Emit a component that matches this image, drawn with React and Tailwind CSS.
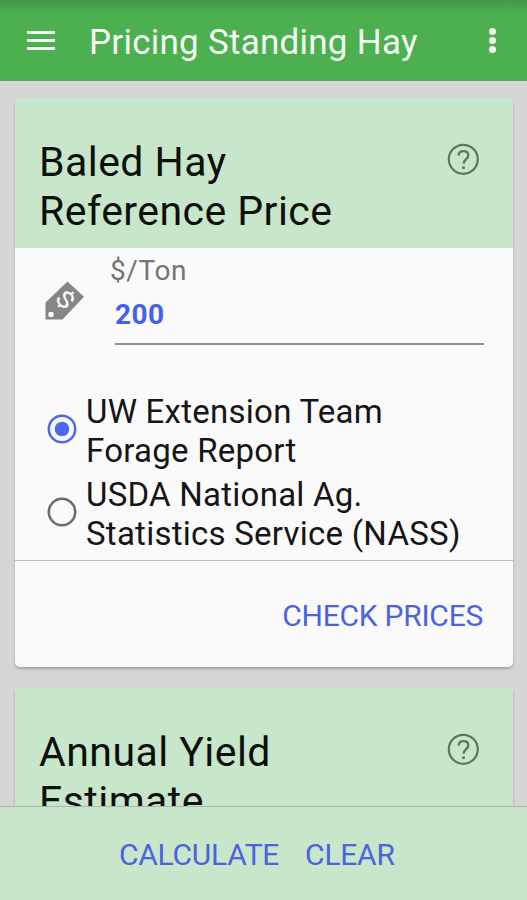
import clsx from "clsx";

const reports = [
  { id: "uw", lines: ["UW Extension Team", "Forage Report"], checked: true },
  { id: "usda", lines: ["USDA National Ag.", "Statistics Service (NASS)"], checked: false },
];

function HelpIcon() {
  return (
    <svg width="32" height="32" viewBox="0 0 32 32" fill="none" stroke="#5a765c" strokeWidth="2.2">
      <circle cx="16.3" cy="16.3" r="14.5" />
      <path d="M11.7 12.6c0-2.8 2-4.4 4.8-4.4 2.9 0 4.8 1.7 4.8 4.2 0 3.7-4.7 4-4.7 8.4" strokeWidth="2.3" />
      <path d="M16.5 23.4v2.6" strokeWidth="2.8" />
    </svg>
  );
}

function TagIcon() {
  return (
    <svg width="40" height="40" viewBox="0 0 40 40">
      <path d="M22.5 0.5 39 15.8 17.5 38.5H0.5V21.5Z" fill="#868686" />
      <rect x="3.5" y="31" width="5" height="5" rx="1.2" fill="#fafafa" />
      <text
        x="0"
        y="0"
        transform="translate(20.5 18.5) rotate(46) scale(1.25 0.95)"
        dy="8.5"
        textAnchor="middle"
        fontSize="24"
        fontFamily="Roboto"
        fill="#fafafa"
      >
        $
      </text>
    </svg>
  );
}

function RadioIcon({ checked }) {
  return (
    <svg
      className={clsx("mb-[4px] shrink-0", checked ? "text-[#4b69ee]" : "text-[#6b6b6b]")}
      width="30"
      height="30"
      viewBox="0 0 30 30"
    >
      <circle cx="15" cy="15" r="13.2" fill="none" stroke="currentColor" strokeWidth="2.5" />
      {checked && <circle cx="15" cy="15" r="7.3" fill="currentColor" />}
    </svg>
  );
}

function CardHeader({ lines }) {
  return (
    <div className="flex h-[150px] items-start justify-between bg-[#c8e6c9] pl-6 pr-[34px]">
      <h2 className="pt-10 text-[41px] leading-[49px] tracking-[0.45px] text-[#0c0f0c]">
        {lines.map((line) => (
          <span key={line} className="block whitespace-nowrap">{line}</span>
        ))}
      </h2>
      <button className="mt-[45px]"><HelpIcon /></button>
    </div>
  );
}

export default function App() {
  return (
    <div className="flex h-[900px] w-[527px] flex-col overflow-hidden bg-[#d6d6d6] font-['Roboto',sans-serif]">
      <header className="flex h-[81px] shrink-0 items-center bg-linear-to-b from-[#429746] via-[#4caf50] via-15% to-[#4caf50] pl-[27px] pr-[31px] text-[#f4fbf0]">
        <div className="flex w-7 flex-col gap-[5px]">
          <span className="h-[3px] bg-current" />
          <span className="h-[3px] bg-current" />
          <span className="h-[3px] bg-current" />
        </div>
        <h1 className="ml-[34px] flex-1 whitespace-nowrap pt-[4px] text-[35px] leading-[42px] tracking-[0.25px]">
          Pricing Standing Hay
        </h1>
        <div className="flex flex-col gap-[2px]">
          <span className="size-[7px] rounded-full bg-current" />
          <span className="size-[7px] rounded-full bg-current" />
          <span className="size-[7px] rounded-full bg-current" />
        </div>
      </header>

      <main className="flex min-h-0 flex-1 flex-col gap-[21px] overflow-hidden pl-[15px] pr-[14px] pt-[17px]">
        <section className="h-[569px] shrink-0 overflow-hidden rounded-[5px] bg-[#fafafa] shadow-[0_2px_3px_rgba(0,0,0,0.25)]">
          <CardHeader lines={["Baled Hay", "Reference Price"]} />
          <div className="flex h-[144px] pl-[30px] pr-[29px]">
            <div className="w-[65px] pt-[33px]"><TagIcon /></div>
            <div className="flex-1">
              <label className="block pt-[6px] text-[28px] leading-[33px] tracking-[0.6px] text-[#757575]">$/Ton</label>
              <div className="ml-[5px] h-[58px] border-b-2 border-[#8f8f8f] pt-[11px] text-[28px] font-bold leading-[33px] tracking-[0.4px] text-[#4461e8]">
                200
              </div>
            </div>
          </div>
          <div className="flex h-[168px] flex-col gap-[5px] pl-[32px]">
            {reports.map((report) => (
              <label
                key={report.id}
                className="flex items-center gap-[9px] text-[33px] leading-[39px] tracking-[0.25px] text-[#151515]"
              >
                <RadioIcon checked={report.checked} />
                <span>
                  {report.lines.map((line) => (
                    <span key={line} className="block whitespace-nowrap">{line}</span>
                  ))}
                </span>
              </label>
            ))}
          </div>
          <div className="flex h-[107px] items-center justify-end border-t border-[#c2c2c2] pr-[30px] pt-[3px]">
            <button className="text-[30px] leading-[36px] tracking-[-0.25px] text-[#4a63e0]">CHECK PRICES</button>
          </div>
        </section>

        <section className="h-[300px] shrink-0 overflow-hidden rounded-[5px] bg-[#fafafa] shadow-[0_2px_3px_rgba(0,0,0,0.25)]">
          <CardHeader lines={["Annual Yield", "Estimate"]} />
        </section>
      </main>

      <footer className="flex h-[94px] shrink-0 items-center gap-[26px] border-t border-[#a9b5a6] bg-[#c8e6c9] pl-[119px] pt-[2px] text-[30px] leading-[36px] tracking-[-0.25px] text-[#4a63e0]">
        <button>CALCULATE</button>
        <button>CLEAR</button>
      </footer>
    </div>
  );
}
